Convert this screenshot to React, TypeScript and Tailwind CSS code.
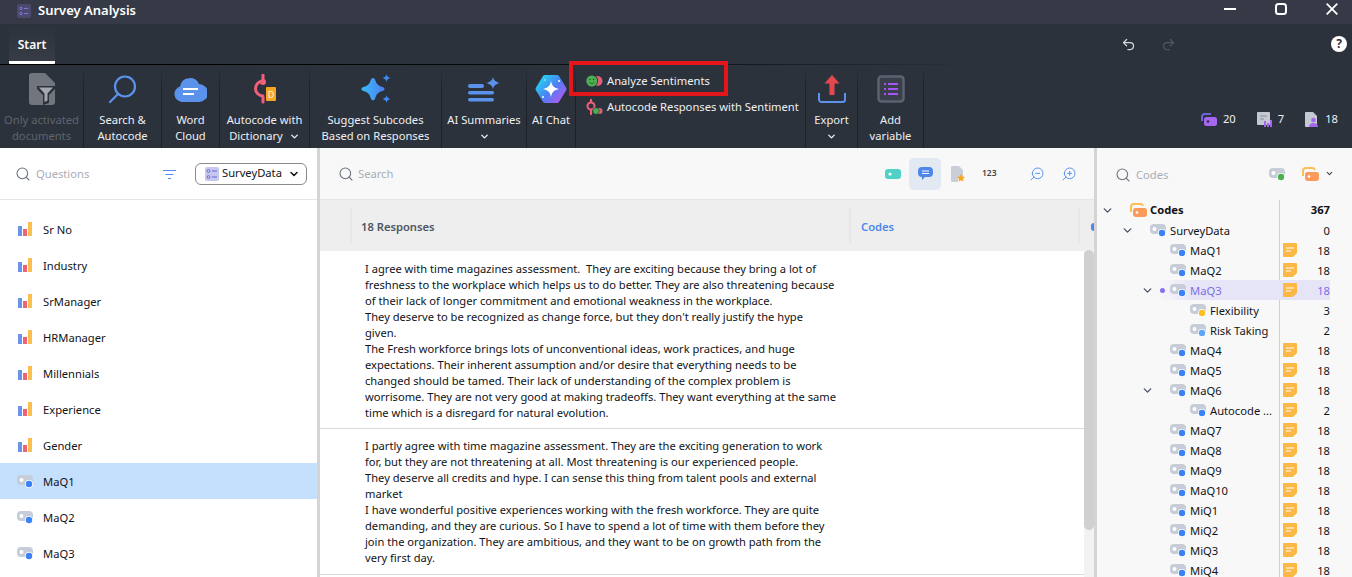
import { ChevronDown, Search, Undo2, Redo2, ZoomIn, ZoomOut } from "lucide-react";

const font = "font-['Noto_Sans','Open_Sans',sans-serif]";

const ToggleIcon = ({ dot = "#3b82f6" }: { dot?: string }) => (
  <svg width="17" height="15" viewBox="0 0 17 15" className="shrink-0">
    <rect x="0" y="1" width="16" height="10" rx="4" fill="#c6ccd8" />
    <circle cx="4.500" cy="6" r="2" fill="#fff" />
    <circle cx="12" cy="10" r="4" fill="#fff" />
    <circle cx="12" cy="10" r="3.200" fill={dot} />
  </svg>
);

const BarsIcon = () => (
  <svg width="15" height="15" viewBox="0 0 15 15" className="shrink-0">
    <rect x="0" y="4" width="4" height="10" fill="#6b94e8" />
    <rect x="5" y="7" width="4" height="7" fill="#f0607a" />
    <rect x="10" y="0" width="4" height="14" fill="#fbbf4f" />
  </svg>
);

const ListBadge = ({ size = 14 }: { size?: number }) => (
  <svg width={size} height={size} viewBox="0 0 14 14" className="shrink-0">
    <rect width="14" height="14" rx="2" fill="#c5c8ec" />
    <circle cx="3.500" cy="4" r="1.400" fill="none" stroke="#6d63d8" strokeWidth="0.9" />
    <circle cx="3.500" cy="10" r="1.400" fill="none" stroke="#6d63d8" strokeWidth="0.9" />
    <path d="M7 4h5M7 10h5" stroke="#6d63d8" strokeWidth="1" />
  </svg>
);

const FolderCode = ({ size = 17 }: { size?: number }) => (
  <svg width={size} height={size * 0.88} viewBox="0 0 17 15" className="shrink-0">
    <path d="M1 9V4a3 3 0 0 1 3-3h6a3 3 0 0 1 3 2" fill="none" stroke="#fbbf4f" strokeWidth="2" />
    <rect x="3" y="5" width="14" height="9" rx="2.500" fill="#fb9a5b" />
    <circle cx="7" cy="9.500" r="1.300" fill="#fff" />
  </svg>
);

const Memo = () => (
  <svg width="14" height="14" viewBox="0 0 14 14" className="shrink-0">
    <path d="M1 0h12a1 1 0 0 1 1 1v9l-4 4H1a1 1 0 0 1-1-1V1a1 1 0 0 1 1-1z" fill="#fbb844" />
    <path d="M3 5h8M3 8h5" stroke="#fff" strokeWidth="1" />
  </svg>
);

const Sep = () => <div className="w-px self-stretch bg-gradient-to-b from-[#2c323c] to-[#1d2128] to-[30%] shrink-0" />;

const RibbonBtn = ({ icon, lines, width, chevron, dim }: {
  icon: React.ReactNode; lines: string[]; width: number; chevron?: "inline" | "below"; dim?: boolean;
}) => (
  <div className={`flex flex-col items-center shrink-0 pt-[7px] ${dim ? "text-[#5f646d]" : "text-[#eef0f3]"}`} style={{ width }}>
    <div className="h-[40px] pb-[6px] flex items-center justify-center">{icon}</div>
    <div className="leading-[16px] text-center whitespace-nowrap">
      {lines.map((l, i) => (
        <div key={l} className="flex items-center justify-center gap-[6px]">
          {l}
          {chevron === "inline" && i === lines.length - 1 && <ChevronDown size={11} strokeWidth={3} />}
        </div>
      ))}
      {chevron === "below" && (
        <div className="flex justify-center h-[16px] items-center"><ChevronDown size={11} strokeWidth={3} /></div>
      )}
    </div>
  </div>
);

const questions: { name: string; kind: "bar" | "code"; active?: boolean }[] = [
  { name: "Sr No", kind: "bar" },
  { name: "Industry", kind: "bar" },
  { name: "SrManager", kind: "bar" },
  { name: "HRManager", kind: "bar" },
  { name: "Millennials", kind: "bar" },
  { name: "Experience", kind: "bar" },
  { name: "Gender", kind: "bar" },
  { name: "MaQ1", kind: "code", active: true },
  { name: "MaQ2", kind: "code" },
  { name: "MaQ3", kind: "code" },
];

type Row = { name: string; depth: number; count: number; memo?: boolean; open?: boolean; dot?: string; active?: boolean };

const rows: Row[] = [
  { name: "SurveyData", depth: 1, count: 0, open: true },
  { name: "MaQ1", depth: 2, count: 18, memo: true },
  { name: "MaQ2", depth: 2, count: 18, memo: true },
  { name: "MaQ3", depth: 2, count: 18, memo: true, open: true, active: true },
  { name: "Flexibility", depth: 3, count: 3, dot: "#fbbf24" },
  { name: "Risk Taking", depth: 3, count: 2, dot: "#60a5fa" },
  { name: "MaQ4", depth: 2, count: 18, memo: true },
  { name: "MaQ5", depth: 2, count: 18, memo: true },
  { name: "MaQ6", depth: 2, count: 18, memo: true, open: true },
  { name: "Autocode ...", depth: 3, count: 2, memo: true },
  { name: "MaQ7", depth: 2, count: 18, memo: true },
  { name: "MaQ8", depth: 2, count: 18, memo: true },
  { name: "MaQ9", depth: 2, count: 18, memo: true },
  { name: "MaQ10", depth: 2, count: 18, memo: true },
  { name: "MiQ1", depth: 2, count: 18, memo: true },
  { name: "MiQ2", depth: 2, count: 18, memo: true },
  { name: "MiQ3", depth: 2, count: 18, memo: true },
  { name: "MiQ4", depth: 2, count: 18, memo: true },
];

const responses = [
  [
    "I agree with time magazines assessment.  They are exciting because they bring a lot of",
    "freshness to the workplace which helps us to do better. They are also threatening because",
    "of their lack of longer commitment and emotional weakness in the workplace.",
    "They deserve to be recognized as change force, but they don't really justify the hype",
    "given.",
    "The Fresh workforce brings lots of unconventional ideas, work practices, and huge",
    "expectations. Their inherent assumption and/or desire that everything needs to be",
    "changed should be tamed. Their lack of understanding of the complex problem is",
    "worrisome. They are not very good at making tradeoffs. They want everything at the same",
    "time which is a disregard for natural evolution.",
  ],
  [
    "I partly agree with time magazine assessment. They are the exciting generation to work",
    "for, but they are not threatening at all. Most threatening is our experienced people.",
    "They deserve all credits and hype. I can sense this thing from talent pools and external",
    "market",
    "I have wonderful positive experiences working with the fresh workforce. They are quite",
    "demanding, and they are curious. So I have to spend a lot of time with them before they",
    "join the organization. They are ambitious, and they want to be on growth path from the",
    "very first day.",
  ],
];

export default function App() {
  return (
    <div className={`${font} w-[1352px] h-[577px] overflow-hidden flex flex-col bg-white text-[11.2px]`}>
      {/* Title bar */}
      <div className="h-[24px] bg-[#353a46] flex items-center shrink-0 text-white pb-[3px]">
        <div className="ml-[17px] w-[14px] h-[14px] rounded-[2px] bg-[#4b4a6e] flex items-center justify-center">
          <svg width="12" height="12" viewBox="0 0 14 14">
            <circle cx="3.500" cy="4" r="1.400" fill="none" stroke="#8b7fe8" strokeWidth="1" />
            <circle cx="3.500" cy="10" r="1.400" fill="none" stroke="#8b7fe8" strokeWidth="1" />
            <path d="M7 4h5M7 10h5" stroke="#8b7fe8" strokeWidth="1" />
          </svg>
        </div>
        <span className="ml-[7px] text-[13px] font-semibold">Survey Analysis</span>
        <div className="ml-auto flex items-center gap-[39px] mr-[14px] mb-[4px]">
          <svg width="12" height="12" viewBox="0 0 12 12"><path d="M0 6h12" stroke="#fff" strokeWidth="2" /></svg>
          <svg width="12" height="12" viewBox="0 0 12 12"><rect x="1" y="1" width="10" height="10" rx="2.500" fill="none" stroke="#fff" strokeWidth="2" /></svg>
          <svg width="12" height="12" viewBox="0 0 12 12"><path d="M.7.7l10.600 10.600M11.300.7L.7 11.300" stroke="#fff" strokeWidth="1.800" /></svg>
        </div>
      </div>

      {/* Tab row */}
      <div className="h-[41px] bg-[#2c323c] flex flex-col shrink-0 text-white">
        <div className="h-[40px] flex items-stretch">
          <div className="ml-[9px] w-[46px] flex flex-col items-center bg-gradient-to-t from-[#363b45] to-[#2c323c] border-b-[3px] border-white rounded-b-[1px]">
            <span className="mt-[12px] font-semibold text-[12px]">Start</span>
          </div>
          <div className="ml-auto flex items-center">
            <Undo2 size={15} className="text-[#d5d8dd] mr-[25px]" />
            <Redo2 size={15} className="text-[#50555e] mr-[155px]" />
            <div className="w-[16px] h-[16px] rounded-full bg-white text-[#2c323c] font-bold text-[12px] flex items-center justify-center mr-[5px]">?</div>
          </div>
        </div>
        <div className="h-px bg-gradient-to-r from-black via-[#15181e] via-[55%] to-[#2c323c] to-[72%]" />
      </div>

      {/* Ribbon */}
      <div className="h-[83px] bg-[#2c323c] flex items-stretch shrink-0 pr-[14px]">
        <RibbonBtn width={83} dim lines={["Only activated", "documents"]} icon={
          <svg width="26" height="32" viewBox="0 0 26 32">
            <path d="M3 0h13l10 10v19a3 3 0 0 1-3 3H3a3 3 0 0 1-3-3V3a3 3 0 0 1 3-3z" fill="#71767e" />
            <path d="M8 13h18v3l-6 6v8l-6 2V22l-6-6z" fill="#2c323c" />
            <path d="M10 14.500h14l-5.500 6v7l-3 1.500v-8.500z" fill="#a4a8ae" />
          </svg>
        } />
        <Sep />
        <RibbonBtn width={77} lines={["Search &", "Autocode"]} icon={
          <svg width="29" height="29" viewBox="0 0 29 29" fill="none" stroke="#5b93ec" strokeWidth="2.200" strokeLinecap="round">
            <circle cx="17" cy="11.500" r="10" />
            <path d="M10 19L2 27" />
          </svg>
        } />
        <Sep />
        <RibbonBtn width={57} lines={["Word", "Cloud"]} icon={
          <svg width="33" height="25" viewBox="0 0 33 25">
            <path d="M8 25a8 8 0 0 1-2-15.600A10 10 0 0 1 25 7a9 9 0 0 1 0 18z" fill="#5b93ec" />
            <path d="M9 12h15M9 17h11" stroke="#fff" strokeWidth="2" />
          </svg>
        } />
        <Sep />
        <RibbonBtn width={89} chevron="inline" lines={["Autocode with", "Dictionary"]} icon={
          <svg width="24" height="30" viewBox="0 0 24 30">
            <path d="M10 1v5M10 22v6" stroke="#f0607a" strokeWidth="3" strokeLinecap="round" />
            <path d="M10 7a7.500 7.500 0 0 0 0 15" fill="none" stroke="#f0607a" strokeWidth="3" />
            <circle cx="10" cy="8" r="3" fill="#f0607a" />
            <rect x="13" y="13" width="10" height="14" rx="1" fill="#f5a623" />
            <text x="18" y="24" textAnchor="middle" fontSize="9" fill="#fff3d6">D</text>
          </svg>
        } />
        <Sep />
        <RibbonBtn width={131} lines={["Suggest Subcodes", "Based on Responses"]} icon={
          <svg width="30" height="30" viewBox="0 0 30 30">
            <defs>
              <linearGradient id="spk" x1="0" y1="0" x2="1" y2="0">
                <stop offset="0" stopColor="#38bdf8" />
                <stop offset="1" stopColor="#4f7df0" />
              </linearGradient>
            </defs>
            <path d="M12 4c1.200 0 1.800.8 2.300 2.300 1.100 3.700 3 5.600 7 6.800 1.400.4 2.200 1 2.200 2s-.8 1.600-2.200 2c-4 1.200-5.900 3.100-7 6.800-.5 1.500-1.100 2.300-2.300 2.300s-1.800-.8-2.300-2.300c-1.100-3.700-3-5.600-7-6.800C1.300 16.700.5 16.100.5 15.100s.8-1.600 2.200-2c4-1.200 5.900-3.100 7-6.800C10.200 4.800 10.800 4 12 4z" fill="url(#spk)" />
            <path d="M25.500 0c.4 2.200 1.200 3.200 3.800 4-2.600.8-3.400 1.800-3.800 4-.4-2.200-1.200-3.200-3.800-4 2.600-.8 3.400-1.800 3.800-4zM25.500 21c.4 2.200 1.200 3.200 3.800 4-2.600.8-3.400 1.800-3.800 4-.4-2.200-1.200-3.200-3.800-4 2.600-.8 3.400-1.800 3.800-4z" fill="#3f8cf0" />
          </svg>
        } />
        <Sep />
        <RibbonBtn width={84} chevron="below" lines={["AI Summaries"]} icon={
          <svg width="32" height="25" viewBox="0 0 32 25">
            <rect x="0" y="7" width="16" height="4" rx="2" fill="#5b93ec" />
            <rect x="0" y="14" width="26" height="3.500" rx="1.700" fill="#5b93ec" />
            <rect x="0" y="21" width="26" height="3.500" rx="1.700" fill="#5b93ec" />
            <path d="M25 0c.6 3 2 4.500 6.500 6-4.500 1.500-5.900 3-6.500 6-.6-3-2-4.500-6.500-6 4.500-1.500 5.900-3 6.500-6z" fill="#5b93ec" />
          </svg>
        } />
        <Sep />
        <RibbonBtn width={48} lines={["AI Chat"]} icon={
          <svg width="32" height="32" viewBox="0 0 32 32">
            <defs>
              <linearGradient id="chat" x1="0" y1="0.1" x2="1" y2="0.9">
                <stop offset="0" stopColor="#22d3f0" />
                <stop offset="0.55" stopColor="#4f7df5" />
                <stop offset="1" stopColor="#b05cf0" />
              </linearGradient>
            </defs>
            <polygon points="10,4.500 22,4.500 29,16 22,27.500 10,27.500 3,16" fill="url(#chat)" stroke="url(#chat)" strokeWidth="5" strokeLinejoin="round" />
            <path d="M16 8c1 5 3 7 8 8-5 1-7 3-8 8-1-5-3-7-8-8 5-1 7-3 8-8z" fill="#fff" />
            <circle cx="24" cy="8" r="1" fill="#fff" />
            <circle cx="8" cy="24" r="1" fill="#fff" />
            <circle cx="10" cy="7" r="0.700" fill="#fff" />
          </svg>
        } />
        <Sep />

        <div className="w-[229px] shrink-0 flex flex-col pt-[3px] text-[#eef0f3] relative whitespace-nowrap">
          <div className="absolute left-[-7px] top-[-4px] w-[159px] h-[35px] border-[4px] border-[#e3161b]" />
          <div className="h-[26px] flex items-center pl-[10px] gap-[4px]">
            <svg width="17" height="12" viewBox="0 0 17 12" className="shrink-0">
              <circle cx="11.500" cy="6" r="5" fill="#e0607a" />
              <circle cx="5.800" cy="6" r="6.300" fill="#2c323c" />
              <circle cx="5.800" cy="6" r="5.500" fill="#4caf50" />
              <circle cx="4" cy="4.500" r="0.800" fill="#1d5a26" />
              <circle cx="7.600" cy="4.500" r="0.800" fill="#1d5a26" />
              <path d="M3.200 7c1.500 2.200 3.700 2.200 5.200 0" stroke="#1d5a26" strokeWidth="0.800" fill="none" />
            </svg>
            Analyze Sentiments
          </div>
          <div className="h-[26px] flex items-center pl-[10px] gap-[4px]">
            <svg width="17" height="17" viewBox="0 0 17 17" className="shrink-0">
              <path d="M5 0v3M5 11v5" stroke="#f0607a" strokeWidth="2" />
              <circle cx="5" cy="7" r="3.500" fill="none" stroke="#f0607a" strokeWidth="2" />
              <circle cx="13.500" cy="12" r="3" fill="#e0607a" />
              <circle cx="10" cy="12" r="3.300" fill="#4caf50" stroke="#2c323c" strokeWidth="0.600" />
            </svg>
            Autocode Responses with Sentiment
          </div>
        </div>
        <Sep />
        <RibbonBtn width={51} chevron="below" lines={["Export"]} icon={
          <svg width="28" height="28" viewBox="0 0 28 28" fill="none">
            <path d="M14 0l7.500 8.500h-5V20h-5V8.500h-5z" fill="#e5484d" />
            <path d="M1 18v6.500A2.500 2.500 0 0 0 3.500 27h21a2.500 2.500 0 0 0 2.500-2.500V18" stroke="#5b93ec" strokeWidth="2" />
          </svg>
        } />
        <Sep />
        <RibbonBtn width={65} lines={["Add", "variable"]} icon={
          <svg width="28" height="28" viewBox="0 0 28 28" fill="none">
            <rect x="1.500" y="1.500" width="25" height="25" rx="3" stroke="#5c6270" strokeWidth="2.500" fill="#3a3f4b" />
            <path d="M11 9h10M11 14h10M11 19h10" stroke="#a855f7" strokeWidth="2" />
            <path d="M7 9h2M7 14h2M7 19h2" stroke="#a855f7" strokeWidth="2" />
          </svg>
        } />
        <Sep />

        <div className="flex-1 flex items-end justify-end pb-[20px] gap-[21px] text-[#eef0f3]">
          <div className="flex items-center gap-[6px]">
            <svg width="16" height="14" viewBox="0 0 16 14">
              <path d="M1 8V4a3 3 0 0 1 3-3h6" fill="none" stroke="#6d63d8" strokeWidth="2" />
              <rect x="3" y="4" width="13" height="9" rx="2.500" fill="#a566f0" />
              <circle cx="7" cy="8.500" r="1.300" fill="#2c323c" />
            </svg>
            20
          </div>
          <div className="flex items-center gap-[6px]">
            <svg width="15" height="15" viewBox="0 0 15 15">
              <rect width="13" height="13" rx="1" fill="#c4c8d0" />
              <path d="M3 4h7M3 7h4" stroke="#8a8fa0" strokeWidth="1" />
              <rect x="7" y="9" width="2" height="6" fill="#a566f0" />
              <rect x="10" y="11" width="2" height="4" fill="#a566f0" />
              <rect x="13" y="8" width="2" height="7" fill="#a566f0" />
            </svg>
            7
          </div>
          <div className="flex items-center gap-[7px]">
            <svg width="13" height="15" viewBox="0 0 13 15">
              <path d="M1 0h7l4 4v10a1 1 0 0 1-1 1H1a1 1 0 0 1-1-1V1a1 1 0 0 1 1-1z" fill="#c4c8d0" />
              <circle cx="8.500" cy="8" r="2.300" fill="#a566f0" />
              <path d="M4 15c0-3 2-4 4.500-4s4.500 1 4.500 4z" fill="#a566f0" />
            </svg>
            18
          </div>
        </div>
      </div>

      {/* Body */}
      <div className="flex-1 flex min-h-0">
        {/* Questions */}
        <div className="w-[320px] shrink-0 flex border-r-[3px] border-[#d4d4d4]">
          <div className="flex-1 flex flex-col min-w-0 text-[#111318]">
            <div className="h-[52px] shrink-0 flex items-center border-b border-[#e6e6e6] pl-[15px] pr-[10px] pt-[2px] bg-white">
              <div className="w-[148px] flex items-center">
                <Search size={16} strokeWidth={1.6} className="text-[#6b7280]" />
                <span className="ml-[5px] text-[#a8adb6]">Questions</span>
              </div>
              <svg width="13" height="9" viewBox="0 0 13 9">
                <path d="M0 .5h13M2.500 4.500h8M5 8.500h3" stroke="#4f8cf5" strokeWidth="1" fill="none" />
              </svg>
              <div className="ml-auto mb-[2px] w-[112px] h-[22px] rounded-[6px] border border-[#8a8a8a] flex items-center pl-[9px] pr-[6px] gap-[3px]">
                <ListBadge />
                <span>SurveyData</span>
                <ChevronDown size={12} strokeWidth={3} className="ml-auto" />
              </div>
            </div>
            <div className="flex flex-col pt-[11px]">
              {questions.map((q) => (
                <div key={q.name} className={`h-[36px] flex items-center pl-[17px] gap-[10px] ${q.active ? "bg-[#c5e0fd]" : ""}`}>
                  <div className="w-[16px] flex justify-center">{q.kind === "bar" ? <BarsIcon /> : <ToggleIcon />}</div>
                  <span className="translate-y-px">{q.name}</span>
                </div>
              ))}
            </div>
          </div>
        </div>

        {/* Responses */}
        <div className="flex-1 min-w-0 flex flex-col relative">
          <div className="h-[52px] shrink-0 bg-[#f8f8f8] border-b border-[#e6e6e6] flex items-center pl-[18px]">
            <div className="flex items-center pt-[2px]">
              <Search size={16} strokeWidth={1.6} className="text-[#6b7280]" />
              <span className="ml-[4px] text-[#a8adb6]">Search</span>
            </div>
            <div className="ml-auto flex items-center mr-[17px]">
              <svg width="16" height="10" viewBox="0 0 16 10" className="mr-[8px]">
                <rect width="16" height="10" rx="3" fill="#4fd1c5" />
                <circle cx="5" cy="5" r="1.600" fill="#fff" />
              </svg>
              <div className="w-[32px] h-[32px] rounded-[5px] bg-[#e2e9f3] flex items-center justify-center">
                <svg width="15" height="14" viewBox="0 0 15 14">
                  <path d="M4 0h7a4 4 0 0 1 4 4v2a4 4 0 0 1-4 4H7l-3 3v-3a4 4 0 0 1-4-4V4a4 4 0 0 1 4-4z" fill="#4f86ea" />
                  <path d="M4 4h7M4 6.500h7" stroke="#fff" strokeWidth="1" />
                </svg>
              </div>
              <svg width="14" height="16" viewBox="0 0 14 16" className="ml-[10px]">
                <path d="M1 0h7l4 4v7H7v5H1a1 1 0 0 1-1-1V1a1 1 0 0 1 1-1z" fill="#c9ced9" />
                <path d="M10 8l1.300 2.500 2.700.4-2 1.900.5 2.700-2.500-1.300-2.500 1.300.5-2.700-2-1.900 2.700-.4z" fill="#f5a623" />
              </svg>
              <span className="ml-[17px] text-[8.500px] font-semibold text-[#444] w-[15px]">123</span>
              <ZoomOut size={16} strokeWidth={1.5} className="ml-[32px] text-[#5b93ec] -scale-x-100" />
              <ZoomIn size={16} strokeWidth={1.5} className="ml-[16px] text-[#5b93ec] -scale-x-100" />
            </div>
          </div>
          <div className="h-[51px] shrink-0 bg-[#eeeeee] flex items-center relative">
            <div className="w-[32px] self-stretch my-[8px] border-r-2 border-[#e6e6e6]" />
            <div className="w-[499px] self-stretch my-[8px] border-r-2 border-[#e6e6e6] flex items-center pl-[9px] pt-[3px] font-semibold text-[#4b5563]">18 Responses</div>
            <div className="w-[229px] self-stretch my-[8px] border-r-2 border-[#e6e6e6] flex items-center pl-[10px] pt-[3px] font-semibold text-[#4f86ea]">Codes</div>
            <div className="ml-[11px] w-[3px] h-[8px] mt-[3px] rounded-l-full bg-[#4f86ea]" />
          </div>
          <div className="flex-1 min-h-0 overflow-hidden bg-white">
            {responses.map((r, i) => (
              <div key={i} className={`border-b border-[#d9d9d9] pl-[45px] text-[#111318] text-[11.15px] leading-[16px] whitespace-pre ${i === 0 ? "pt-[10px] pb-[7px]" : "pt-[9px] pb-[8px]"}`}>
                {r.map((l) => <div key={l}>{l}</div>)}
              </div>
            ))}
          </div>
          <div className="absolute right-0 top-[102px] bottom-0 w-[10px] bg-[#f2f2f2]">
            <div className="w-[10px] h-[280px] rounded-[5px] bg-[#d0d0d0]" />
          </div>
        </div>

        {/* Codes */}
        <div className="w-[258px] shrink-0 bg-[#f8f8f8] border-l-[3px] border-[#d4d4d4] flex flex-col text-[#111318]">
          <div className="h-[52px] shrink-0 flex items-center pl-[18px]">
            <div className="w-[154px] flex items-center pt-[2px]">
              <Search size={16} strokeWidth={1.6} className="text-[#6b7280]" />
              <span className="ml-[5px] text-[#a8adb6]">Codes</span>
            </div>
            <ToggleIcon dot="#4caf50" />
            <div className="ml-[16px] flex items-center gap-[6px]">
              <FolderCode />
              <ChevronDown size={9} strokeWidth={3} className="text-[#444]" />
            </div>
          </div>
          <div className="relative flex-1 min-h-0 overflow-hidden">
            <div className="absolute left-[182px] top-0 bottom-0 w-px bg-[#cfcfcf]" />
            <div className="h-[20px] flex items-center relative font-bold text-[#111]">
              <ChevronDown size={13} strokeWidth={2.5} className="absolute left-[4px] text-[#4b5563]" />
              <div className="absolute left-[33px]"><FolderCode /></div>
              <span className="absolute left-[53px]">Codes</span>
              <span className="absolute right-[22px]">367</span>
            </div>
            {rows.map((r) => {
              const left = r.depth === 1 ? 53 : r.depth === 2 ? 73 : 93;
              return (
                <div key={r.name} className={`h-[20px] relative flex items-center ${r.active ? "bg-gradient-to-r from-transparent from-[26%] to-[#e6e4f7] to-[42%] mr-[22px] text-[#7c6ee6]" : ""}`}>
                  {r.open && <ChevronDown size={13} strokeWidth={2.5} className={`absolute text-[#4b5563] ${r.depth === 1 ? "left-[24px]" : "left-[44px]"}`} />}
                  {r.active && <div className="absolute left-[63px] w-[5px] h-[5px] rounded-full bg-[#8b6ff0]" />}
                  <div className="absolute" style={{ left }}><ToggleIcon dot={r.dot} /></div>
                  <span className="absolute whitespace-nowrap translate-y-px" style={{ left: left + 20 }}>{r.name}</span>
                  {r.memo && <div className="absolute left-[186px]"><Memo /></div>}
                  <span className={`absolute translate-y-px ${r.active ? "right-0" : "right-[22px]"}`}>{r.count}</span>
                </div>
              );
            })}
          </div>
        </div>
      </div>
    </div>
  );
}
